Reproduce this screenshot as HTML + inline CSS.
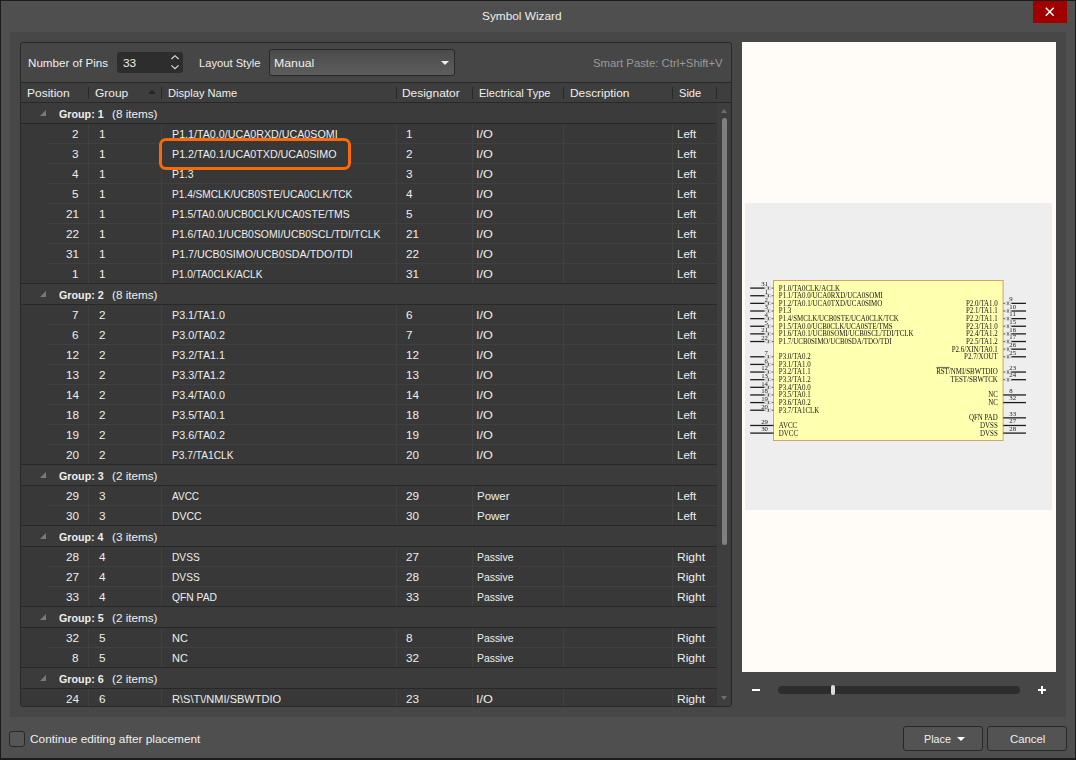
<!DOCTYPE html>
<html lang="en"><head><meta charset="utf-8"><title>Symbol Wizard</title>
<style>
*{box-sizing:border-box}
html,body{margin:0;padding:0}
body{width:1076px;height:760px;position:relative;overflow:hidden;background:#4f4f4f;font-family:"Liberation Sans",sans-serif;font-size:11.5px;color:#eeeeee}
.win *{position:absolute}
.win{position:absolute;left:0;top:0;width:1076px;height:760px}
.frame{left:0;top:0;width:1076px;height:760px;border:1px solid #1c1c1c;border-bottom-width:2px}
.t{white-space:nowrap;line-height:15px;transform-origin:0 0;display:block}
.close{left:1033px;top:1px;width:34px;height:22px;background:#a00000}
.inner{left:10px;top:32px;width:1056px;height:685px;background:#474747}
.panel{left:20px;top:42px;width:712px;height:665px;border:1px solid #282828;border-radius:3px;background:#383838}
.tb{left:21px;top:43px;width:710px;height:39px;background:#464646;border-radius:2px 2px 0 0}
.spin{left:117px;top:52px;width:66px;height:21px;background:#2d2d2d;border-radius:3px}
.dd{left:269px;top:49px;width:186px;height:27px;border:1px solid #282828;border-radius:3px;background:linear-gradient(#4b4b4b,#5d5d5d)}
.hdrline{left:21px;top:82px;width:710px;height:1px;background:#282828}
.hdr{left:21px;top:83px;width:710px;height:19px;background:#3e3e3e}
.hdr2{left:21px;top:102px;width:710px;height:1px;background:#282828}
.hs{top:87px;width:1px;height:12px;background:#282828}
.grp{left:21px;width:696px;height:22px;margin-top:-1px;background:#3b3b3b;border-bottom:1px solid #282828;border-top:1px solid #282828}
.tri{left:40px;width:0;height:0;border-left:6px solid transparent;border-bottom:6px solid #7a7a7a}
.row{left:21px;width:696px;height:20px;background:#383838}
.row:after{content:"";position:absolute;left:26px;right:0;bottom:0;height:1px;background:#404040}
.vl{top:124px;width:1px;height:582px;background:#404040}
.sb{left:717px;top:103px;width:14px;height:603px;background:#3e3e3e}
.thumb{left:721.5px;top:118px;width:5.5px;height:427px;background:#808080;border-radius:3px}
.prev{left:742px;top:42px;width:314px;height:630px;background:#fffcf8}
.pl{font-family:"Liberation Serif",serif;font-size:7.35px;fill:#141414}
.pn{font-family:"Liberation Serif",serif;font-size:7.15px;fill:#1a1a1a}
.track{left:778px;top:686px;width:242px;height:8px;border-radius:4px;background:#2d2d2d}
.knob{left:831px;top:685px;width:4px;height:10px;border-radius:2px;background:#dcdcdc}
.btn{top:726px;height:25px;border:1px solid #282828;border-radius:3px;background:#535353}
.cb{left:9px;top:731px;width:16px;height:16px;border:1px solid #282828;border-radius:3px;background:#565656}
.hl{left:159px;top:138px;width:192px;height:32px;border:3.5px solid #f96b0a;border-radius:7px;background:#383838}
.clip{left:0;top:0;width:732px;height:706px;overflow:hidden}
</style></head><body>
<div class="win">
<div class="frame"></div>
<span class="t" style="left:481.96px;top:9px;transform:scaleX(1.0295)">Symbol Wizard</span>
<div class="close"><svg style="left:12px;top:6px" width="10" height="10" viewBox="0 0 10 10"><path d="M0.8 0.8 L8.7 8.7 M8.7 0.8 L0.8 8.7" stroke="#fff" stroke-width="1.45" fill="none"/></svg></div>
<div class="inner"></div>
<div class="panel"></div>
<div class="tb"></div>
<span class="t" style="left:28.25px;top:56px;transform:scaleX(1.0103)">Number of Pins</span>
<div class="spin"><svg style="left:53px;top:2px" width="10" height="17" viewBox="0 0 10 17"><path d="M1.4 5.0 L5 1.7 L8.6 5.0 M1.4 11.4 L5 14.7 L8.6 11.4" stroke="#ddd" stroke-width="1.15" fill="none"/></svg></div>
<span class="t" style="left:123.35px;top:56px;transform:scaleX(1.0297)">33</span>
<span class="t" style="left:198.68px;top:56px;transform:scaleX(0.9719)">Layout Style</span>
<div class="dd"><i style="left:171px;top:11px;width:0;height:0;border-left:4px solid transparent;border-right:4px solid transparent;border-top:4px solid #eee"></i></div>
<span class="t" style="left:274.39px;top:56px;transform:scaleX(1.0693)">Manual</span>
<span class="t" style="left:593.19px;top:56px;transform:scaleX(0.9848);color:#9a9a9a">Smart Paste: Ctrl+Shift+V</span>
<div class="hdrline"></div><div class="hdr"></div><div class="hdr2"></div>
<span class="t" style="left:26.52px;top:86px;transform:scaleX(1.0428)">Position</span><i class="hs" style="left:88px"></i>
<span class="t" style="left:94.70px;top:86px;transform:scaleX(1.0388)">Group</span><i style="left:148px;top:90px;width:0;height:0;border-left:4px solid transparent;border-right:4px solid transparent;border-bottom:4.5px solid #242424"></i><i class="hs" style="left:161px"></i>
<span class="t" style="left:167.59px;top:86px;transform:scaleX(0.9669)">Display Name</span><i class="hs" style="left:396px"></i>
<span class="t" style="left:402.32px;top:86px;transform:scaleX(1.0371)">Designator</span><i class="hs" style="left:472px"></i>
<span class="t" style="left:478.70px;top:86px;transform:scaleX(0.9588)">Electrical Type</span><i class="hs" style="left:563px"></i>
<span class="t" style="left:569.73px;top:86px;transform:scaleX(1.0335)">Description</span><i class="hs" style="left:672px"></i>
<span class="t" style="left:679.10px;top:86px;transform:scaleX(0.9644)">Side</span><i class="hs" style="left:716px"></i>
<div class="clip">
<div class="row" style="top:124px"></div>
<div class="row" style="top:144px"></div>
<div class="row" style="top:164px"></div>
<div class="row" style="top:184px"></div>
<div class="row" style="top:204px"></div>
<div class="row" style="top:224px"></div>
<div class="row" style="top:244px"></div>
<div class="row" style="top:264px"></div>
<div class="row" style="top:305px"></div>
<div class="row" style="top:325px"></div>
<div class="row" style="top:345px"></div>
<div class="row" style="top:365px"></div>
<div class="row" style="top:385px"></div>
<div class="row" style="top:405px"></div>
<div class="row" style="top:425px"></div>
<div class="row" style="top:445px"></div>
<div class="row" style="top:486px"></div>
<div class="row" style="top:506px"></div>
<div class="row" style="top:547px"></div>
<div class="row" style="top:567px"></div>
<div class="row" style="top:587px"></div>
<div class="row" style="top:628px"></div>
<div class="row" style="top:648px"></div>
<div class="row" style="top:689px"></div>
<i class="vl" style="left:88px"></i><i class="vl" style="left:161px"></i><i class="vl" style="left:396px"></i><i class="vl" style="left:472px"></i><i class="vl" style="left:563px"></i><i class="vl" style="left:672px"></i>
<div class="grp" style="top:103px"></div><i class="tri" style="top:110px"></i>
<div class="grp" style="top:284px"></div><i class="tri" style="top:291px"></i>
<div class="grp" style="top:465px"></div><i class="tri" style="top:472px"></i>
<div class="grp" style="top:526px"></div><i class="tri" style="top:533px"></i>
<div class="grp" style="top:607px"></div><i class="tri" style="top:614px"></i>
<div class="grp" style="top:668px"></div><i class="tri" style="top:675px"></i>
<span class="t" style="left:58.96px;top:107px;transform:scaleX(0.9316);font-weight:bold">Group: 1</span>
<span class="t" style="left:112.08px;top:107px;transform:scaleX(1.0162)">(8 items)</span>
<span class="t" style="left:72.47px;top:127px;transform:scaleX(1.0200)">2</span>
<span class="t" style="left:98.91px;top:127px;transform:scaleX(1.0200)">1</span>
<span class="t" style="left:171.62px;top:127px;transform:scaleX(0.9302)">P1.1/TA0.0/UCA0RXD/UCA0SOMI</span>
<span class="t" style="left:406.41px;top:127px;transform:scaleX(1.0200)">1</span>
<span class="t" style="left:476.33px;top:127px;transform:scaleX(1.1003)">I/O</span>
<span class="t" style="left:676.66px;top:127px;transform:scaleX(0.9970)">Left</span>
<span class="t" style="left:72.39px;top:147px;transform:scaleX(1.0200)">3</span>
<span class="t" style="left:98.91px;top:147px;transform:scaleX(1.0200)">1</span>
<span class="t" style="left:171.62px;top:147px;transform:scaleX(0.9303)">P1.2/TA0.1/UCA0TXD/UCA0SIMO</span>
<span class="t" style="left:406.11px;top:147px;transform:scaleX(1.0200)">2</span>
<span class="t" style="left:476.33px;top:147px;transform:scaleX(1.1003)">I/O</span>
<span class="t" style="left:676.66px;top:147px;transform:scaleX(0.9970)">Left</span>
<span class="t" style="left:72.22px;top:167px;transform:scaleX(1.0200)">4</span>
<span class="t" style="left:98.91px;top:167px;transform:scaleX(1.0200)">1</span>
<span class="t" style="left:171.64px;top:167px;transform:scaleX(0.9096)">P1.3</span>
<span class="t" style="left:406.25px;top:167px;transform:scaleX(1.0200)">3</span>
<span class="t" style="left:476.33px;top:167px;transform:scaleX(1.1003)">I/O</span>
<span class="t" style="left:676.66px;top:167px;transform:scaleX(0.9970)">Left</span>
<span class="t" style="left:72.37px;top:187px;transform:scaleX(1.0200)">5</span>
<span class="t" style="left:98.91px;top:187px;transform:scaleX(1.0200)">1</span>
<span class="t" style="left:171.67px;top:187px;transform:scaleX(0.8791)">P1.4/SMCLK/UCB0STE/UCA0CLK/TCK</span>
<span class="t" style="left:406.43px;top:187px;transform:scaleX(1.0200)">4</span>
<span class="t" style="left:476.33px;top:187px;transform:scaleX(1.1003)">I/O</span>
<span class="t" style="left:676.66px;top:187px;transform:scaleX(0.9970)">Left</span>
<span class="t" style="left:65.93px;top:207px;transform:scaleX(1.0200)">21</span>
<span class="t" style="left:98.91px;top:207px;transform:scaleX(1.0200)">1</span>
<span class="t" style="left:171.65px;top:207px;transform:scaleX(0.9034)">P1.5/TA0.0/UCB0CLK/UCA0STE/TMS</span>
<span class="t" style="left:406.23px;top:207px;transform:scaleX(1.0200)">5</span>
<span class="t" style="left:476.33px;top:207px;transform:scaleX(1.1003)">I/O</span>
<span class="t" style="left:676.66px;top:207px;transform:scaleX(0.9970)">Left</span>
<span class="t" style="left:65.94px;top:227px;transform:scaleX(1.0200)">22</span>
<span class="t" style="left:98.91px;top:227px;transform:scaleX(1.0200)">1</span>
<span class="t" style="left:171.65px;top:227px;transform:scaleX(0.9044)">P1.6/TA0.1/UCB0SOMI/UCB0SCL/TDI/TCLK</span>
<span class="t" style="left:406.11px;top:227px;transform:scaleX(1.0200)">21</span>
<span class="t" style="left:476.33px;top:227px;transform:scaleX(1.1003)">I/O</span>
<span class="t" style="left:676.66px;top:227px;transform:scaleX(0.9970)">Left</span>
<span class="t" style="left:65.93px;top:247px;transform:scaleX(1.0200)">31</span>
<span class="t" style="left:98.91px;top:247px;transform:scaleX(1.0200)">1</span>
<span class="t" style="left:171.62px;top:247px;transform:scaleX(0.9331)">P1.7/UCB0SIMO/UCB0SDA/TDO/TDI</span>
<span class="t" style="left:406.11px;top:247px;transform:scaleX(1.0200)">22</span>
<span class="t" style="left:476.33px;top:247px;transform:scaleX(1.1003)">I/O</span>
<span class="t" style="left:676.66px;top:247px;transform:scaleX(0.9970)">Left</span>
<span class="t" style="left:72.45px;top:267px;transform:scaleX(1.0200)">1</span>
<span class="t" style="left:98.91px;top:267px;transform:scaleX(1.0200)">1</span>
<span class="t" style="left:171.67px;top:267px;transform:scaleX(0.8807)">P1.0/TA0CLK/ACLK</span>
<span class="t" style="left:406.25px;top:267px;transform:scaleX(1.0200)">31</span>
<span class="t" style="left:476.33px;top:267px;transform:scaleX(1.1003)">I/O</span>
<span class="t" style="left:676.66px;top:267px;transform:scaleX(0.9970)">Left</span>
<span class="t" style="left:58.96px;top:288px;transform:scaleX(0.9344);font-weight:bold">Group: 2</span>
<span class="t" style="left:112.08px;top:288px;transform:scaleX(1.0162)">(8 items)</span>
<span class="t" style="left:72.47px;top:308px;transform:scaleX(1.0200)">7</span>
<span class="t" style="left:98.81px;top:308px;transform:scaleX(1.0200)">2</span>
<span class="t" style="left:171.62px;top:308px;transform:scaleX(0.9333)">P3.1/TA1.0</span>
<span class="t" style="left:406.10px;top:308px;transform:scaleX(1.0200)">6</span>
<span class="t" style="left:476.33px;top:308px;transform:scaleX(1.1003)">I/O</span>
<span class="t" style="left:676.66px;top:308px;transform:scaleX(0.9970)">Left</span>
<span class="t" style="left:72.39px;top:328px;transform:scaleX(1.0200)">6</span>
<span class="t" style="left:98.81px;top:328px;transform:scaleX(1.0200)">2</span>
<span class="t" style="left:171.62px;top:328px;transform:scaleX(0.9355)">P3.0/TA0.2</span>
<span class="t" style="left:406.10px;top:328px;transform:scaleX(1.0200)">7</span>
<span class="t" style="left:476.33px;top:328px;transform:scaleX(1.1003)">I/O</span>
<span class="t" style="left:676.66px;top:328px;transform:scaleX(0.9970)">Left</span>
<span class="t" style="left:65.94px;top:348px;transform:scaleX(1.0200)">12</span>
<span class="t" style="left:98.81px;top:348px;transform:scaleX(1.0200)">2</span>
<span class="t" style="left:171.62px;top:348px;transform:scaleX(0.9352)">P3.2/TA1.1</span>
<span class="t" style="left:406.41px;top:348px;transform:scaleX(1.0200)">12</span>
<span class="t" style="left:476.33px;top:348px;transform:scaleX(1.1003)">I/O</span>
<span class="t" style="left:676.66px;top:348px;transform:scaleX(0.9970)">Left</span>
<span class="t" style="left:65.87px;top:368px;transform:scaleX(1.0200)">13</span>
<span class="t" style="left:98.81px;top:368px;transform:scaleX(1.0200)">2</span>
<span class="t" style="left:171.62px;top:368px;transform:scaleX(0.9355)">P3.3/TA1.2</span>
<span class="t" style="left:406.41px;top:368px;transform:scaleX(1.0200)">13</span>
<span class="t" style="left:476.33px;top:368px;transform:scaleX(1.1003)">I/O</span>
<span class="t" style="left:676.66px;top:368px;transform:scaleX(0.9970)">Left</span>
<span class="t" style="left:65.70px;top:388px;transform:scaleX(1.0200)">14</span>
<span class="t" style="left:98.81px;top:388px;transform:scaleX(1.0200)">2</span>
<span class="t" style="left:171.62px;top:388px;transform:scaleX(0.9333)">P3.4/TA0.0</span>
<span class="t" style="left:406.41px;top:388px;transform:scaleX(1.0200)">14</span>
<span class="t" style="left:476.33px;top:388px;transform:scaleX(1.1003)">I/O</span>
<span class="t" style="left:676.66px;top:388px;transform:scaleX(0.9970)">Left</span>
<span class="t" style="left:65.86px;top:408px;transform:scaleX(1.0200)">18</span>
<span class="t" style="left:98.81px;top:408px;transform:scaleX(1.0200)">2</span>
<span class="t" style="left:171.62px;top:408px;transform:scaleX(0.9352)">P3.5/TA0.1</span>
<span class="t" style="left:406.41px;top:408px;transform:scaleX(1.0200)">18</span>
<span class="t" style="left:476.33px;top:408px;transform:scaleX(1.1003)">I/O</span>
<span class="t" style="left:676.66px;top:408px;transform:scaleX(0.9970)">Left</span>
<span class="t" style="left:65.91px;top:428px;transform:scaleX(1.0200)">19</span>
<span class="t" style="left:98.81px;top:428px;transform:scaleX(1.0200)">2</span>
<span class="t" style="left:171.62px;top:428px;transform:scaleX(0.9355)">P3.6/TA0.2</span>
<span class="t" style="left:406.41px;top:428px;transform:scaleX(1.0200)">19</span>
<span class="t" style="left:476.33px;top:428px;transform:scaleX(1.1003)">I/O</span>
<span class="t" style="left:676.66px;top:428px;transform:scaleX(0.9970)">Left</span>
<span class="t" style="left:65.81px;top:448px;transform:scaleX(1.0200)">20</span>
<span class="t" style="left:98.81px;top:448px;transform:scaleX(1.0200)">2</span>
<span class="t" style="left:171.67px;top:448px;transform:scaleX(0.8847)">P3.7/TA1CLK</span>
<span class="t" style="left:406.11px;top:448px;transform:scaleX(1.0200)">20</span>
<span class="t" style="left:476.33px;top:448px;transform:scaleX(1.1003)">I/O</span>
<span class="t" style="left:676.66px;top:448px;transform:scaleX(0.9970)">Left</span>
<span class="t" style="left:58.96px;top:469px;transform:scaleX(0.9335);font-weight:bold">Group: 3</span>
<span class="t" style="left:112.08px;top:469px;transform:scaleX(1.0162)">(2 items)</span>
<span class="t" style="left:65.91px;top:489px;transform:scaleX(1.0200)">29</span>
<span class="t" style="left:98.95px;top:489px;transform:scaleX(1.0200)">3</span>
<span class="t" style="left:172.48px;top:489px;transform:scaleX(0.8715)">AVCC</span>
<span class="t" style="left:406.11px;top:489px;transform:scaleX(1.0200)">29</span>
<span class="t" style="left:476.56px;top:489px;transform:scaleX(0.9980)">Power</span>
<span class="t" style="left:676.66px;top:489px;transform:scaleX(0.9970)">Left</span>
<span class="t" style="left:65.81px;top:509px;transform:scaleX(1.0200)">30</span>
<span class="t" style="left:98.95px;top:509px;transform:scaleX(1.0200)">3</span>
<span class="t" style="left:171.64px;top:509px;transform:scaleX(0.9101)">DVCC</span>
<span class="t" style="left:406.25px;top:509px;transform:scaleX(1.0200)">30</span>
<span class="t" style="left:476.56px;top:509px;transform:scaleX(0.9980)">Power</span>
<span class="t" style="left:676.66px;top:509px;transform:scaleX(0.9970)">Left</span>
<span class="t" style="left:58.96px;top:530px;transform:scaleX(0.9265);font-weight:bold">Group: 4</span>
<span class="t" style="left:112.08px;top:530px;transform:scaleX(1.0162)">(3 items)</span>
<span class="t" style="left:65.86px;top:550px;transform:scaleX(1.0200)">28</span>
<span class="t" style="left:99.13px;top:550px;transform:scaleX(1.0200)">4</span>
<span class="t" style="left:171.67px;top:550px;transform:scaleX(0.8846)">DVSS</span>
<span class="t" style="left:406.11px;top:550px;transform:scaleX(1.0200)">27</span>
<span class="t" style="left:476.65px;top:550px;transform:scaleX(0.9043)">Passive</span>
<span class="t" style="left:676.61px;top:550px;transform:scaleX(1.0457)">Right</span>
<span class="t" style="left:65.94px;top:570px;transform:scaleX(1.0200)">27</span>
<span class="t" style="left:99.13px;top:570px;transform:scaleX(1.0200)">4</span>
<span class="t" style="left:171.67px;top:570px;transform:scaleX(0.8846)">DVSS</span>
<span class="t" style="left:406.11px;top:570px;transform:scaleX(1.0200)">28</span>
<span class="t" style="left:476.65px;top:570px;transform:scaleX(0.9043)">Passive</span>
<span class="t" style="left:676.61px;top:570px;transform:scaleX(1.0457)">Right</span>
<span class="t" style="left:65.87px;top:590px;transform:scaleX(1.0200)">33</span>
<span class="t" style="left:99.13px;top:590px;transform:scaleX(1.0200)">4</span>
<span class="t" style="left:172.01px;top:590px;transform:scaleX(0.8949)">QFN PAD</span>
<span class="t" style="left:406.25px;top:590px;transform:scaleX(1.0200)">33</span>
<span class="t" style="left:476.65px;top:590px;transform:scaleX(0.9043)">Passive</span>
<span class="t" style="left:676.61px;top:590px;transform:scaleX(1.0457)">Right</span>
<span class="t" style="left:58.96px;top:611px;transform:scaleX(0.9316);font-weight:bold">Group: 5</span>
<span class="t" style="left:112.08px;top:611px;transform:scaleX(1.0162)">(2 items)</span>
<span class="t" style="left:65.94px;top:631px;transform:scaleX(1.0200)">32</span>
<span class="t" style="left:98.93px;top:631px;transform:scaleX(1.0200)">5</span>
<span class="t" style="left:171.60px;top:631px;transform:scaleX(0.9522)">NC</span>
<span class="t" style="left:406.19px;top:631px;transform:scaleX(1.0200)">8</span>
<span class="t" style="left:476.65px;top:631px;transform:scaleX(0.9043)">Passive</span>
<span class="t" style="left:676.61px;top:631px;transform:scaleX(1.0457)">Right</span>
<span class="t" style="left:72.39px;top:651px;transform:scaleX(1.0200)">8</span>
<span class="t" style="left:98.93px;top:651px;transform:scaleX(1.0200)">5</span>
<span class="t" style="left:171.60px;top:651px;transform:scaleX(0.9522)">NC</span>
<span class="t" style="left:406.25px;top:651px;transform:scaleX(1.0200)">32</span>
<span class="t" style="left:476.65px;top:651px;transform:scaleX(0.9043)">Passive</span>
<span class="t" style="left:676.61px;top:651px;transform:scaleX(1.0457)">Right</span>
<span class="t" style="left:58.96px;top:672px;transform:scaleX(0.9335);font-weight:bold">Group: 6</span>
<span class="t" style="left:112.08px;top:672px;transform:scaleX(1.0162)">(2 items)</span>
<span class="t" style="left:65.70px;top:692px;transform:scaleX(1.0200)">24</span>
<span class="t" style="left:98.80px;top:692px;transform:scaleX(1.0200)">6</span>
<span class="t" style="left:171.59px;top:692px;transform:scaleX(0.9597)">R\S\T\/NMI/SBWTDIO</span>
<span class="t" style="left:406.11px;top:692px;transform:scaleX(1.0200)">23</span>
<span class="t" style="left:476.33px;top:692px;transform:scaleX(1.1003)">I/O</span>
<span class="t" style="left:676.61px;top:692px;transform:scaleX(1.0457)">Right</span>
</div>
<div class="hl"></div>
<span class="t" style="left:171.62px;top:147px;transform:scaleX(0.9303)">P1.2/TA0.1/UCA0TXD/UCA0SIMO</span>
<div class="sb"></div>
<i style="left:721px;top:109px;width:0;height:0;border-left:3.5px solid transparent;border-right:3.5px solid transparent;border-bottom:4px solid #6e6e6e"></i>
<div class="thumb"></div>
<i style="left:721px;top:696px;width:0;height:0;border-left:3.5px solid transparent;border-right:3.5px solid transparent;border-top:4px solid #6e6e6e"></i>
<div class="prev"><svg width="314" height="630" viewBox="0 0 314 630" style="left:0;top:0;will-change:transform">
<rect x="3" y="161" width="307" height="307" fill="#eeeeee"/>
<rect x="31.5" y="238.5" width="229.6" height="160" fill="#ffffb0" stroke="#d6a070" stroke-width="1"/>
<text transform="translate(26 244.4) scale(0.95 1)" class="pn" text-anchor="end">31</text>
<line x1="8.2" y1="246.1" x2="22.6" y2="246.1" stroke="#1c1c1c" stroke-width="1.3"/>
<path d="M22.3 246.1 L26.0 244.4 V247.8 Z M30.4 246.1 L26.8 244.4 V247.8 Z" fill="#fdfdfd" stroke="#8a8a8a" stroke-width="0.45"/>
<path d="M26.4 244.9 V247.3 M30.2 246.1 H31.5" stroke="#333" stroke-width="0.8" fill="none"/>
<text transform="translate(36.8 248.5) scale(0.945 1)" class="pl">P1.0/TA0CLK/ACLK</text>
<text transform="translate(26 252.03) scale(0.95 1)" class="pn" text-anchor="end">1</text>
<line x1="8.2" y1="253.73" x2="22.6" y2="253.73" stroke="#1c1c1c" stroke-width="1.3"/>
<path d="M22.3 253.73 L26.0 252.03 V255.43 Z M30.4 253.73 L26.8 252.03 V255.43 Z" fill="#fdfdfd" stroke="#8a8a8a" stroke-width="0.45"/>
<path d="M26.4 252.53 V254.93 M30.2 253.73 H31.5" stroke="#333" stroke-width="0.8" fill="none"/>
<text transform="translate(36.8 256.13) scale(0.945 1)" class="pl">P1.1/TA0.0/UCA0RXD/UCA0SOMI</text>
<text transform="translate(26 259.66) scale(0.95 1)" class="pn" text-anchor="end">2</text>
<line x1="8.2" y1="261.36" x2="22.6" y2="261.36" stroke="#1c1c1c" stroke-width="1.3"/>
<path d="M22.3 261.36 L26.0 259.66 V263.06 Z M30.4 261.36 L26.8 259.66 V263.06 Z" fill="#fdfdfd" stroke="#8a8a8a" stroke-width="0.45"/>
<path d="M26.4 260.16 V262.56 M30.2 261.36 H31.5" stroke="#333" stroke-width="0.8" fill="none"/>
<text transform="translate(36.8 263.76) scale(0.945 1)" class="pl">P1.2/TA0.1/UCA0TXD/UCA0SIMO</text>
<text transform="translate(26 267.3) scale(0.95 1)" class="pn" text-anchor="end">3</text>
<line x1="8.2" y1="269.0" x2="22.6" y2="269.0" stroke="#1c1c1c" stroke-width="1.3"/>
<path d="M22.3 269.0 L26.0 267.3 V270.7 Z M30.4 269.0 L26.8 267.3 V270.7 Z" fill="#fdfdfd" stroke="#8a8a8a" stroke-width="0.45"/>
<path d="M26.4 267.8 V270.2 M30.2 269.0 H31.5" stroke="#333" stroke-width="0.8" fill="none"/>
<text transform="translate(36.8 271.4) scale(0.945 1)" class="pl">P1.3</text>
<text transform="translate(26 274.93) scale(0.95 1)" class="pn" text-anchor="end">4</text>
<line x1="8.2" y1="276.63" x2="22.6" y2="276.63" stroke="#1c1c1c" stroke-width="1.3"/>
<path d="M22.3 276.63 L26.0 274.93 V278.33 Z M30.4 276.63 L26.8 274.93 V278.33 Z" fill="#fdfdfd" stroke="#8a8a8a" stroke-width="0.45"/>
<path d="M26.4 275.43 V277.83 M30.2 276.63 H31.5" stroke="#333" stroke-width="0.8" fill="none"/>
<text transform="translate(36.8 279.03) scale(0.945 1)" class="pl">P1.4/SMCLK/UCB0STE/UCA0CLK/TCK</text>
<text transform="translate(26 282.56) scale(0.95 1)" class="pn" text-anchor="end">5</text>
<line x1="8.2" y1="284.26" x2="22.6" y2="284.26" stroke="#1c1c1c" stroke-width="1.3"/>
<path d="M22.3 284.26 L26.0 282.56 V285.96 Z M30.4 284.26 L26.8 282.56 V285.96 Z" fill="#fdfdfd" stroke="#8a8a8a" stroke-width="0.45"/>
<path d="M26.4 283.06 V285.46 M30.2 284.26 H31.5" stroke="#333" stroke-width="0.8" fill="none"/>
<text transform="translate(36.8 286.66) scale(0.945 1)" class="pl">P1.5/TA0.0/UCB0CLK/UCA0STE/TMS</text>
<text transform="translate(26 290.19) scale(0.95 1)" class="pn" text-anchor="end">21</text>
<line x1="8.2" y1="291.89" x2="22.6" y2="291.89" stroke="#1c1c1c" stroke-width="1.3"/>
<path d="M22.3 291.89 L26.0 290.19 V293.59 Z M30.4 291.89 L26.8 290.19 V293.59 Z" fill="#fdfdfd" stroke="#8a8a8a" stroke-width="0.45"/>
<path d="M26.4 290.69 V293.09 M30.2 291.89 H31.5" stroke="#333" stroke-width="0.8" fill="none"/>
<text transform="translate(36.8 294.29) scale(0.945 1)" class="pl">P1.6/TA0.1/UCB0SOMI/UCB0SCL/TDI/TCLK</text>
<text transform="translate(26 297.82) scale(0.95 1)" class="pn" text-anchor="end">22</text>
<line x1="8.2" y1="299.52" x2="22.6" y2="299.52" stroke="#1c1c1c" stroke-width="1.3"/>
<path d="M22.3 299.52 L26.0 297.82 V301.22 Z M30.4 299.52 L26.8 297.82 V301.22 Z" fill="#fdfdfd" stroke="#8a8a8a" stroke-width="0.45"/>
<path d="M26.4 298.32 V300.72 M30.2 299.52 H31.5" stroke="#333" stroke-width="0.8" fill="none"/>
<text transform="translate(36.8 301.92) scale(0.945 1)" class="pl">P1.7/UCB0SIMO/UCB0SDA/TDO/TDI</text>
<text transform="translate(26 313.09) scale(0.95 1)" class="pn" text-anchor="end">7</text>
<line x1="8.2" y1="314.79" x2="22.6" y2="314.79" stroke="#1c1c1c" stroke-width="1.3"/>
<path d="M22.3 314.79 L26.0 313.09 V316.49 Z M30.4 314.79 L26.8 313.09 V316.49 Z" fill="#fdfdfd" stroke="#8a8a8a" stroke-width="0.45"/>
<path d="M26.4 313.59 V315.99 M30.2 314.79 H31.5" stroke="#333" stroke-width="0.8" fill="none"/>
<text transform="translate(36.8 317.19) scale(0.945 1)" class="pl">P3.0/TA0.2</text>
<text transform="translate(26 320.72) scale(0.95 1)" class="pn" text-anchor="end">6</text>
<line x1="8.2" y1="322.42" x2="22.6" y2="322.42" stroke="#1c1c1c" stroke-width="1.3"/>
<path d="M22.3 322.42 L26.0 320.72 V324.12 Z M30.4 322.42 L26.8 320.72 V324.12 Z" fill="#fdfdfd" stroke="#8a8a8a" stroke-width="0.45"/>
<path d="M26.4 321.22 V323.62 M30.2 322.42 H31.5" stroke="#333" stroke-width="0.8" fill="none"/>
<text transform="translate(36.8 324.82) scale(0.945 1)" class="pl">P3.1/TA1.0</text>
<text transform="translate(26 328.35) scale(0.95 1)" class="pn" text-anchor="end">12</text>
<line x1="8.2" y1="330.05" x2="22.6" y2="330.05" stroke="#1c1c1c" stroke-width="1.3"/>
<path d="M22.3 330.05 L26.0 328.35 V331.75 Z M30.4 330.05 L26.8 328.35 V331.75 Z" fill="#fdfdfd" stroke="#8a8a8a" stroke-width="0.45"/>
<path d="M26.4 328.85 V331.25 M30.2 330.05 H31.5" stroke="#333" stroke-width="0.8" fill="none"/>
<text transform="translate(36.8 332.45) scale(0.945 1)" class="pl">P3.2/TA1.1</text>
<text transform="translate(26 335.98) scale(0.95 1)" class="pn" text-anchor="end">13</text>
<line x1="8.2" y1="337.68" x2="22.6" y2="337.68" stroke="#1c1c1c" stroke-width="1.3"/>
<path d="M22.3 337.68 L26.0 335.98 V339.38 Z M30.4 337.68 L26.8 335.98 V339.38 Z" fill="#fdfdfd" stroke="#8a8a8a" stroke-width="0.45"/>
<path d="M26.4 336.48 V338.88 M30.2 337.68 H31.5" stroke="#333" stroke-width="0.8" fill="none"/>
<text transform="translate(36.8 340.08) scale(0.945 1)" class="pl">P3.3/TA1.2</text>
<text transform="translate(26 343.62) scale(0.95 1)" class="pn" text-anchor="end">14</text>
<line x1="8.2" y1="345.32" x2="22.6" y2="345.32" stroke="#1c1c1c" stroke-width="1.3"/>
<path d="M22.3 345.32 L26.0 343.62 V347.02 Z M30.4 345.32 L26.8 343.62 V347.02 Z" fill="#fdfdfd" stroke="#8a8a8a" stroke-width="0.45"/>
<path d="M26.4 344.12 V346.52 M30.2 345.32 H31.5" stroke="#333" stroke-width="0.8" fill="none"/>
<text transform="translate(36.8 347.72) scale(0.945 1)" class="pl">P3.4/TA0.0</text>
<text transform="translate(26 351.25) scale(0.95 1)" class="pn" text-anchor="end">18</text>
<line x1="8.2" y1="352.95" x2="22.6" y2="352.95" stroke="#1c1c1c" stroke-width="1.3"/>
<path d="M22.3 352.95 L26.0 351.25 V354.65 Z M30.4 352.95 L26.8 351.25 V354.65 Z" fill="#fdfdfd" stroke="#8a8a8a" stroke-width="0.45"/>
<path d="M26.4 351.75 V354.15 M30.2 352.95 H31.5" stroke="#333" stroke-width="0.8" fill="none"/>
<text transform="translate(36.8 355.35) scale(0.945 1)" class="pl">P3.5/TA0.1</text>
<text transform="translate(26 358.88) scale(0.95 1)" class="pn" text-anchor="end">19</text>
<line x1="8.2" y1="360.58" x2="22.6" y2="360.58" stroke="#1c1c1c" stroke-width="1.3"/>
<path d="M22.3 360.58 L26.0 358.88 V362.28 Z M30.4 360.58 L26.8 358.88 V362.28 Z" fill="#fdfdfd" stroke="#8a8a8a" stroke-width="0.45"/>
<path d="M26.4 359.38 V361.78 M30.2 360.58 H31.5" stroke="#333" stroke-width="0.8" fill="none"/>
<text transform="translate(36.8 362.98) scale(0.945 1)" class="pl">P3.6/TA0.2</text>
<text transform="translate(26 366.51) scale(0.95 1)" class="pn" text-anchor="end">20</text>
<line x1="8.2" y1="368.21" x2="22.6" y2="368.21" stroke="#1c1c1c" stroke-width="1.3"/>
<path d="M22.3 368.21 L26.0 366.51 V369.91 Z M30.4 368.21 L26.8 366.51 V369.91 Z" fill="#fdfdfd" stroke="#8a8a8a" stroke-width="0.45"/>
<path d="M26.4 367.01 V369.41 M30.2 368.21 H31.5" stroke="#333" stroke-width="0.8" fill="none"/>
<text transform="translate(36.8 370.61) scale(0.945 1)" class="pl">P3.7/TA1CLK</text>
<text transform="translate(26 381.78) scale(0.95 1)" class="pn" text-anchor="end">29</text>
<line x1="8.2" y1="383.48" x2="31.5" y2="383.48" stroke="#1c1c1c" stroke-width="1.3"/>
<text transform="translate(36.8 385.88) scale(0.945 1)" class="pl">AVCC</text>
<text transform="translate(26 389.41) scale(0.95 1)" class="pn" text-anchor="end">30</text>
<line x1="8.2" y1="391.11" x2="31.5" y2="391.11" stroke="#1c1c1c" stroke-width="1.3"/>
<text transform="translate(36.8 393.51) scale(0.945 1)" class="pl">DVCC</text>
<text transform="translate(267.3 259.16) scale(0.95 1)" class="pn">9</text>
<line x1="269.2" y1="261.36" x2="284" y2="261.36" stroke="#1c1c1c" stroke-width="1.3"/>
<path d="M262.4 261.36 L265.6 259.66 V263.06 Z M269.6 261.36 L266.4 259.66 V263.06 Z" fill="#fdfdfd" stroke="#8a8a8a" stroke-width="0.45"/>
<path d="M266.0 260.16 V262.56 M261.3 261.36 H262.8" stroke="#333" stroke-width="0.8" fill="none"/>
<text transform="translate(255.8 263.76) scale(0.945 1)" class="pl" text-anchor="end">P2.0/TA1.0</text>
<text transform="translate(267.3 266.8) scale(0.95 1)" class="pn">10</text>
<line x1="269.2" y1="269.0" x2="284" y2="269.0" stroke="#1c1c1c" stroke-width="1.3"/>
<path d="M262.4 269.0 L265.6 267.3 V270.7 Z M269.6 269.0 L266.4 267.3 V270.7 Z" fill="#fdfdfd" stroke="#8a8a8a" stroke-width="0.45"/>
<path d="M266.0 267.8 V270.2 M261.3 269.0 H262.8" stroke="#333" stroke-width="0.8" fill="none"/>
<text transform="translate(255.8 271.4) scale(0.945 1)" class="pl" text-anchor="end">P2.1/TA1.1</text>
<text transform="translate(267.3 274.43) scale(0.95 1)" class="pn">11</text>
<line x1="269.2" y1="276.63" x2="284" y2="276.63" stroke="#1c1c1c" stroke-width="1.3"/>
<path d="M262.4 276.63 L265.6 274.93 V278.33 Z M269.6 276.63 L266.4 274.93 V278.33 Z" fill="#fdfdfd" stroke="#8a8a8a" stroke-width="0.45"/>
<path d="M266.0 275.43 V277.83 M261.3 276.63 H262.8" stroke="#333" stroke-width="0.8" fill="none"/>
<text transform="translate(255.8 279.03) scale(0.945 1)" class="pl" text-anchor="end">P2.2/TA1.1</text>
<text transform="translate(267.3 282.06) scale(0.95 1)" class="pn">15</text>
<line x1="269.2" y1="284.26" x2="284" y2="284.26" stroke="#1c1c1c" stroke-width="1.3"/>
<path d="M262.4 284.26 L265.6 282.56 V285.96 Z M269.6 284.26 L266.4 282.56 V285.96 Z" fill="#fdfdfd" stroke="#8a8a8a" stroke-width="0.45"/>
<path d="M266.0 283.06 V285.46 M261.3 284.26 H262.8" stroke="#333" stroke-width="0.8" fill="none"/>
<text transform="translate(255.8 286.66) scale(0.945 1)" class="pl" text-anchor="end">P2.3/TA1.0</text>
<text transform="translate(267.3 289.69) scale(0.95 1)" class="pn">16</text>
<line x1="269.2" y1="291.89" x2="284" y2="291.89" stroke="#1c1c1c" stroke-width="1.3"/>
<path d="M262.4 291.89 L265.6 290.19 V293.59 Z M269.6 291.89 L266.4 290.19 V293.59 Z" fill="#fdfdfd" stroke="#8a8a8a" stroke-width="0.45"/>
<path d="M266.0 290.69 V293.09 M261.3 291.89 H262.8" stroke="#333" stroke-width="0.8" fill="none"/>
<text transform="translate(255.8 294.29) scale(0.945 1)" class="pl" text-anchor="end">P2.4/TA1.2</text>
<text transform="translate(267.3 297.32) scale(0.95 1)" class="pn">17</text>
<line x1="269.2" y1="299.52" x2="284" y2="299.52" stroke="#1c1c1c" stroke-width="1.3"/>
<path d="M262.4 299.52 L265.6 297.82 V301.22 Z M269.6 299.52 L266.4 297.82 V301.22 Z" fill="#fdfdfd" stroke="#8a8a8a" stroke-width="0.45"/>
<path d="M266.0 298.32 V300.72 M261.3 299.52 H262.8" stroke="#333" stroke-width="0.8" fill="none"/>
<text transform="translate(255.8 301.92) scale(0.945 1)" class="pl" text-anchor="end">P2.5/TA1.2</text>
<text transform="translate(267.3 304.96) scale(0.95 1)" class="pn">26</text>
<line x1="269.2" y1="307.16" x2="284" y2="307.16" stroke="#1c1c1c" stroke-width="1.3"/>
<path d="M262.4 307.16 L265.6 305.46 V308.86 Z M269.6 307.16 L266.4 305.46 V308.86 Z" fill="#fdfdfd" stroke="#8a8a8a" stroke-width="0.45"/>
<path d="M266.0 305.96 V308.36 M261.3 307.16 H262.8" stroke="#333" stroke-width="0.8" fill="none"/>
<text transform="translate(255.8 309.56) scale(0.945 1)" class="pl" text-anchor="end">P2.6/XIN/TA0.1</text>
<text transform="translate(267.3 312.59) scale(0.95 1)" class="pn">25</text>
<line x1="269.2" y1="314.79" x2="284" y2="314.79" stroke="#1c1c1c" stroke-width="1.3"/>
<path d="M262.4 314.79 L265.6 313.09 V316.49 Z M269.6 314.79 L266.4 313.09 V316.49 Z" fill="#fdfdfd" stroke="#8a8a8a" stroke-width="0.45"/>
<path d="M266.0 313.59 V315.99 M261.3 314.79 H262.8" stroke="#333" stroke-width="0.8" fill="none"/>
<text transform="translate(255.8 317.19) scale(0.945 1)" class="pl" text-anchor="end">P2.7/XOUT</text>
<text transform="translate(267.3 327.85) scale(0.95 1)" class="pn">23</text>
<line x1="269.2" y1="330.05" x2="284" y2="330.05" stroke="#1c1c1c" stroke-width="1.3"/>
<path d="M262.4 330.05 L265.6 328.35 V331.75 Z M269.6 330.05 L266.4 328.35 V331.75 Z" fill="#fdfdfd" stroke="#8a8a8a" stroke-width="0.45"/>
<path d="M266.0 328.85 V331.25 M261.3 330.05 H262.8" stroke="#333" stroke-width="0.8" fill="none"/>
<text transform="translate(255.8 332.45) scale(0.945 1)" class="pl" text-anchor="end">RST/NMI/SBWTDIO</text>
<line x1="194.4" y1="325.4" x2="207.6" y2="325.4" stroke="#222" stroke-width="0.7"/>
<text transform="translate(267.3 335.48) scale(0.95 1)" class="pn">24</text>
<line x1="269.2" y1="337.68" x2="284" y2="337.68" stroke="#1c1c1c" stroke-width="1.3"/>
<path d="M262.4 337.68 L265.6 335.98 V339.38 Z M269.6 337.68 L266.4 335.98 V339.38 Z" fill="#fdfdfd" stroke="#8a8a8a" stroke-width="0.45"/>
<path d="M266.0 336.48 V338.88 M261.3 337.68 H262.8" stroke="#333" stroke-width="0.8" fill="none"/>
<text transform="translate(255.8 340.08) scale(0.945 1)" class="pl" text-anchor="end">TEST/SBWTCK</text>
<text transform="translate(267.3 350.75) scale(0.95 1)" class="pn">8</text>
<line x1="261.3" y1="352.95" x2="284" y2="352.95" stroke="#1c1c1c" stroke-width="1.3"/>
<text transform="translate(255.8 355.35) scale(0.945 1)" class="pl" text-anchor="end">NC</text>
<text transform="translate(267.3 358.38) scale(0.95 1)" class="pn">32</text>
<line x1="261.3" y1="360.58" x2="284" y2="360.58" stroke="#1c1c1c" stroke-width="1.3"/>
<text transform="translate(255.8 362.98) scale(0.945 1)" class="pl" text-anchor="end">NC</text>
<text transform="translate(267.3 373.64) scale(0.95 1)" class="pn">33</text>
<line x1="261.3" y1="375.84" x2="284" y2="375.84" stroke="#1c1c1c" stroke-width="1.3"/>
<text transform="translate(255.8 378.24) scale(0.945 1)" class="pl" text-anchor="end">QFN PAD</text>
<text transform="translate(267.3 381.28) scale(0.95 1)" class="pn">27</text>
<line x1="261.3" y1="383.48" x2="284" y2="383.48" stroke="#1c1c1c" stroke-width="1.3"/>
<text transform="translate(255.8 385.88) scale(0.945 1)" class="pl" text-anchor="end">DVSS</text>
<text transform="translate(267.3 388.91) scale(0.95 1)" class="pn">28</text>
<line x1="261.3" y1="391.11" x2="284" y2="391.11" stroke="#1c1c1c" stroke-width="1.3"/>
<text transform="translate(255.8 393.51) scale(0.945 1)" class="pl" text-anchor="end">DVSS</text>
</svg></div>
<i style="left:752px;top:689px;width:8px;height:2px;background:#fff"></i>
<div class="track"></div><div class="knob"></div>
<i style="left:1038px;top:689px;width:8px;height:2px;background:#fff"></i><i style="left:1041px;top:686px;width:2px;height:8px;background:#fff"></i>
<div class="cb"></div>
<span class="t" style="left:29.70px;top:732px;transform:scaleX(1.0291)">Continue editing after placement</span>
<div class="btn" style="left:903px;width:80px"><i style="left:53px;top:10px;width:0;height:0;border-left:4px solid transparent;border-right:4px solid transparent;border-top:4px solid #fff"></i></div>
<span class="t" style="left:924.32px;top:732px;transform:scaleX(0.9336)">Place</span>
<div class="btn" style="left:987px;width:80px"></div>
<span class="t" style="left:1009.83px;top:732px;transform:scaleX(0.9842)">Cancel</span>
</div>
</body></html>
